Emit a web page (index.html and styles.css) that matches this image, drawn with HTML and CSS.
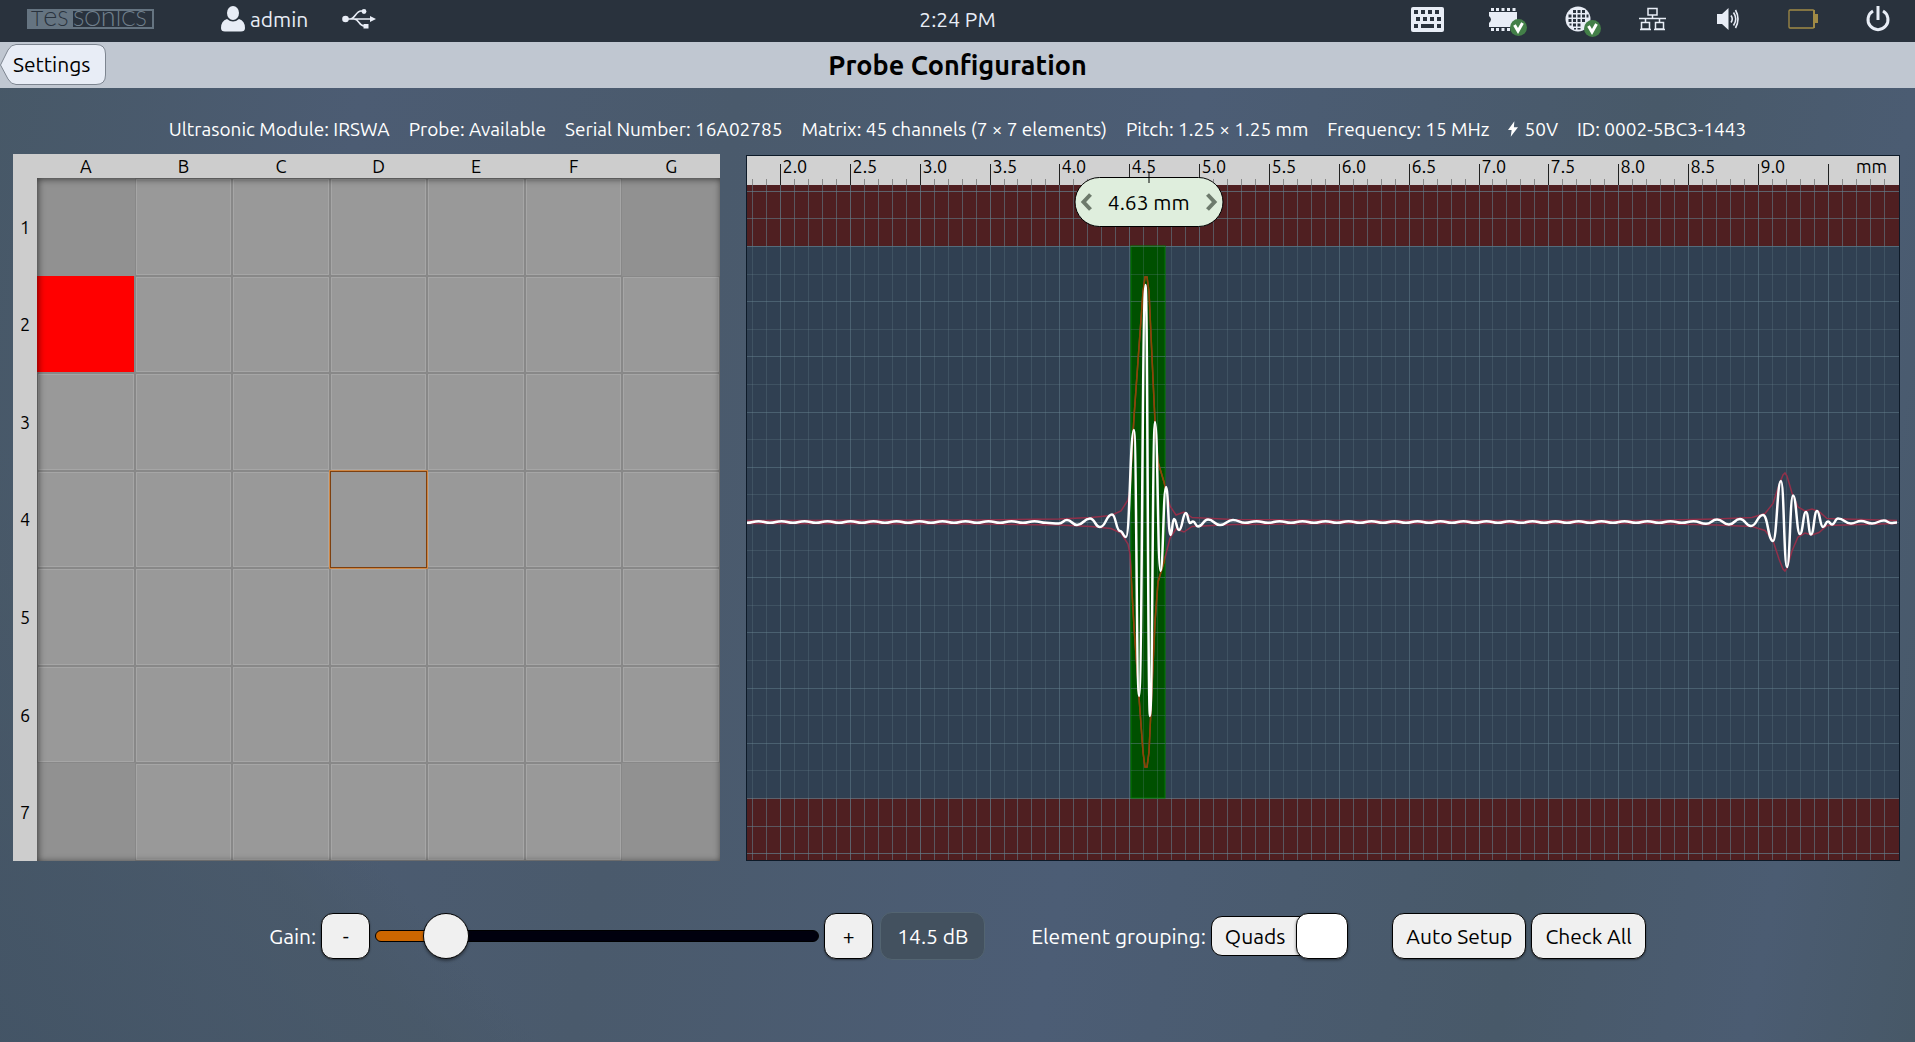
FILE: index.html
```html
<!DOCTYPE html>
<html lang="en">
<head>
  <meta charset="UTF-8" />
  <meta name="viewport" content="width=device-width, initial-scale=1.0"/>
  <title>Probe Configuration</title>
  <link rel="stylesheet" href="styles.css">
</head>
<body>

  <header class="topbar">
    <div class="topbar-left">
      <svg class="logo" width="127" height="20" viewBox="0 0 127 20" role="img" aria-label="Tessonics">
        <rect x="0" y="0" width="46" height="20" class="logo-fill"/>
        <rect x="1" y="1" width="125" height="18" class="logo-frame"/>
        <text x="4" y="17" class="logo-dark">T<tspan class="logo-low">e</tspan>S</text>
        <text x="46" y="17" class="logo-light">SO<tspan class="logo-low">n</tspan>ICS</text>
      </svg>
      <button class="user-btn">
        <svg width="24" height="26" viewBox="0 0 24 26" fill="currentColor">
          <ellipse cx="12" cy="7" rx="6" ry="7"/>
          <path d="M6 13q6 5 12 0q6 2 6 9q0 3.500-4 3.500H4q-4 0-4-3.500q0-7 6-9z"/>
        </svg>
        admin
      </button>
      <svg class="usb" width="34" height="20" viewBox="0 0 34 20" fill="none" stroke="currentColor" stroke-width="1.600">
        <circle cx="3.500" cy="10" r="3.300" fill="currentColor" stroke="none"/>
        <path d="M3 10h26M8 10c5 0 6-8 11-8h3M12 10c5 0 5 7 10 7h2"/>
        <path d="M28 7l6 3l-6 3z" fill="currentColor" stroke="none"/>
        <circle cx="22" cy="2.500" r="2.400" fill="currentColor" stroke="none"/>
        <rect x="21.500" y="15" width="5" height="4.500" fill="currentColor" stroke="none"/>
      </svg>
    </div>
    <div class="clock">2:24 PM</div>
    <div class="status">
      <button aria-label="Keyboard">
        <svg width="33" height="25" viewBox="0 0 33 25">
          <rect width="33" height="25" rx="2" fill="currentColor"/>
          <path class="cut" d="M3 3h4v4H3zM10 3h4v4h-4zM17 3h4v4h-4zM24 3h4v4h-4zM5 10h4v4H5zM12 10h4v4h-4zM19 10h4v4h-4zM26 10h4v4h-4zM3 17h4v4H3zM10 17h13v4H10zM26 17h4v4h-4z"/>
        </svg>
      </button>
      <button aria-label="Module">
        <span class="badged">
          <svg width="28" height="23" viewBox="0 0 28 23" fill="currentColor">
            <path d="M0 4h28v15H0v-4q4-3.500 0-7zM2 0h3v3H2zM7 0h3v3H7zM12.500 0h3v3h-3zM18 0h3v3h-3zM23.500 0h3v3h-3zM2 20h3v3H2zM7 20h3v3H7zM12.500 20h3v3h-3zM18 20h3v3h-3z"/>
          </svg>
          <svg class="badge" width="17" height="17" viewBox="0 0 17 17"><circle cx="8.500" cy="8.500" r="8.500"/><path d="M4.500 6l3.500 6l4.500-8"/></svg>
        </span>
      </button>
      <button aria-label="Network">
        <span class="badged">
          <svg width="26" height="26" viewBox="0 0 26 26">
            <circle cx="13" cy="13" r="12.500" fill="currentColor"/>
            <path class="cut" d="M8 4h3v3H8zM12.500 4h3v3h-3zM17 4h3v3h-3zM3.500 8.500h3v3h-3zM8 8.500h3v3H8zM12.500 8.500h3v3h-3zM17 8.500h3v3h-3zM21.500 8.500h2v3h-2zM3.500 13h3v3h-3zM8 13h3v3H8zM12.500 13h3v3h-3zM17 13h3v3h-3zM4.500 17.500h2v2h-2zM8 17.500h3v3H8zM12.500 17.500h3v3h-3zM9 22h2v1.500H9zM12.500 22h3v1.500h-3z"/>
          </svg>
          <svg class="badge" width="17" height="17" viewBox="0 0 17 17"><circle cx="8.500" cy="8.500" r="8.500"/><path d="M4.500 6l3.500 6l4.500-8"/></svg>
        </span>
      </button>
      <button aria-label="LAN">
        <svg width="27" height="24" viewBox="0 0 27 24" fill="none" stroke="currentColor" stroke-width="1.500">
          <path d="M9 1.500h9v6.500H9zM13.500 8v3.500M0 11.500h27M6.500 11.500V15M20.500 11.500V15M2.500 15.500h8V22h-8zM16.500 15.500h8V22h-8zM1 22.500h11M15 22.500h11"/>
        </svg>
      </button>
      <button aria-label="Volume">
        <svg width="22" height="22" viewBox="0 0 22 22" fill="none" stroke="currentColor" stroke-width="1.600">
          <path d="M0 6h5l6.500-6v22L5 16H0z" fill="currentColor" stroke="none"/>
          <path d="M14 7.500q2.500 3.500 0 7M16.500 4.500q4.500 6.500 0 13M18.500 2q5 9 0 18"/>
        </svg>
      </button>
      <button aria-label="Battery">
        <svg class="battery" width="30" height="20" viewBox="0 0 30 20">
          <rect x="1" y="1" width="25" height="18" rx="1" fill="none" stroke="currentColor" stroke-width="1.300"/>
          <path d="M25 1h2v4h3v9h-3v5h-2z" fill="currentColor"/>
        </svg>
      </button>
      <button aria-label="Power">
        <svg width="24" height="26" viewBox="0 0 24 26" fill="none" stroke="currentColor" stroke-width="3">
          <path d="M7 5a10 10 0 1 0 10 0M12 0v14"/>
        </svg>
      </button>
    </div>
  </header>

  <div class="titlebar">
    <a class="back" href="#settings">
      <svg width="107" height="42" viewBox="0 0 107 42">
        <path d="M0.500 21L8 6Q11 0.500 16 0.500H96Q105.500 0.500 105.500 10V31Q105.500 40.500 96 40.500H16Q11 40.500 8 35Z"/>
      </svg>
      <span>Settings</span>
    </a>
    <h1>Probe Configuration</h1>
  </div>

  <main>
    <div class="info">
      <span>Ultrasonic Module: IRSWA</span>
      <span>Probe: Available</span>
      <span>Serial Number: 16A02785</span>
      <span>Matrix: 45 channels (7 × 7 elements)</span>
      <span>Pitch: 1.25 × 1.25 mm</span>
      <span>Frequency: 15 MHz</span>
      <span><svg width="10" height="16" viewBox="0 0 11 17" fill="currentColor"><path d="M7 0L0 9.500h4L3 17l8-10.500H6.500z"/></svg> 50V</span>
      <span>ID: 0002-5BC3-1443</span>
    </div>

    <div class="panels">
      <div class="matrix">
        <div class="cols"><span>A</span><span>B</span><span>C</span><span>D</span><span>E</span><span>F</span><span>G</span></div>
        <div class="rows"><span>1</span><span>2</span><span>3</span><span>4</span><span>5</span><span>6</span><span>7</span></div>
        <div class="cells" id="cells"></div>
      </div>

      <div class="scan">
        <svg id="chart" viewBox="0 0 1154 706">
          <defs>
            <clipPath id="gate-clip"><rect x="385" y="91" width="34" height="552"/></clipPath>
          </defs>
          <rect class="plot" width="1154" height="706"/>
          <rect class="limit" y="30" width="1154" height="61"/>
          <rect class="limit" y="643" width="1154" height="63"/>
          <g id="grid"></g>
          <rect class="gate" x="385" y="91" width="34" height="552"/>
          <g id="gate-grid" clip-path="url(#gate-clip)"></g>
          <rect class="ruler" width="1154" height="30"/>
          <g id="ticks"></g>
          <g id="waves"></g>
          <rect class="frame" x="0.500" y="0.500" width="1153" height="705"/>
        </svg>
        <div class="gate-pill">
          <button aria-label="Decrease"><svg width="12" height="18" viewBox="0 0 12 18"><path d="M10 1.500L3 9l7 7.500"/></svg></button>
          <span>4.63 mm</span>
          <button aria-label="Increase"><svg width="12" height="18" viewBox="0 0 12 18"><path d="M2 1.500L9 9l-7 7.500"/></svg></button>
        </div>
      </div>
    </div>

    <div class="controls">
      <div class="group">
        <label for="gain">Gain:</label>
        <button class="btn step" id="gain-down">-</button>
        <input type="range" id="gain" min="0" max="124" step="0.5" value="14.5">
        <button class="btn step" id="gain-up">+</button>
        <output class="gain-value" id="gain-value" for="gain">14.5 dB</output>
      </div>
      <div class="group">
        <label for="grouping">Element grouping:</label>
        <label class="toggle">
          <input type="checkbox" id="grouping" checked>
          <span class="toggle-text">Quads</span>
          <span class="knob"></span>
        </label>
      </div>
      <div class="group">
        <button class="btn">Auto Setup</button>
        <button class="btn">Check All</button>
      </div>
    </div>
  </main>

  <script src="script.js"></script>
</body>
</html>
```
FILE: styles.css
```css
* {
  box-sizing: border-box;
}

body {
  margin: 0;
  min-height: 100vh;
  font-family: Ubuntu, "Noto Sans", sans-serif;
  font-size: 21px;
  line-height: 28px;
  color: #fff;
  background:
    linear-gradient(48deg, rgba(66, 83, 100, 0.8) 0%, rgba(72, 88, 103, 0.7) 15%, rgba(72, 88, 103, 0) 19%),
    linear-gradient(100deg, #475867 0%, #4c5c73 18%, #4a5a6c 36%, #4c5d75 58%, #485969 80%, #4b5c72 92%, #475867 100%);
}

button {
  font: inherit;
  color: inherit;
  background: none;
  border: none;
  padding: 0;
  cursor: pointer;
}

svg {
  display: block;
  overflow: visible;
}

/* top bar */
.topbar {
  display: grid;
  grid-template-columns: 1fr auto 1fr;
  align-items: center;
  height: 42px;
  padding-bottom: 4px;
  background: #29323d;
  color: #e8edf6;
}

.topbar-left {
  display: flex;
  align-items: center;
  padding-left: 27px;
}

.logo-fill {
  fill: #657481;
}

.logo-frame {
  fill: none;
  stroke: #657481;
  stroke-width: 2;
}

.logo text {
  font-family: Lato, sans-serif;
  font-weight: 300;
  font-size: 21px;
}

.logo .logo-low {
  font-size: 27px;
}

.logo-dark {
  fill: #29323d;
}

.logo-light {
  fill: #71808d;
}

.user-btn {
  display: flex;
  align-items: center;
  gap: 5px;
  margin-left: 67px;
}

.usb {
  margin-left: 34px;
}

.status {
  display: flex;
  justify-content: flex-end;
}

.status button {
  width: 75px;
  height: 38px;
  display: flex;
  justify-content: center;
  align-items: center;
}

.cut {
  fill: #29323d;
}

.badged {
  position: relative;
}

.badge {
  position: absolute;
  right: -10px;
  bottom: -5px;
}

.badge circle {
  fill: #437f48;
}

.badge path {
  fill: none;
  stroke: #fff;
  stroke-width: 3;
}

.battery {
  color: #a08a45;
}

/* title bar */
.titlebar {
  display: grid;
  grid-template-columns: 1fr auto 1fr;
  align-items: center;
  height: 46px;
  background: #c0c7d1;
  color: #000;
}

.titlebar h1 {
  margin: 0;
  font-size: 27px;
  line-height: 32px;
}

.back {
  display: grid;
  justify-self: start;
  align-items: center;
  color: #000;
  text-decoration: none;
}

.back svg,
.back span {
  grid-area: 1 / 1;
}

.back span {
  padding: 0 0 3px 13px;
}

.back path {
  fill: #e8edf6;
  stroke: #7d8590;
}

/* probe info */
.info {
  display: flex;
  justify-content: center;
  gap: 19px;
  padding: 27px 0 11px;
  font-size: 19px;
}

.info span {
  display: flex;
  align-items: center;
  gap: 6px;
  white-space: nowrap;
}

.panels {
  display: grid;
  grid-template-columns: 707fr 1154fr;
  gap: 26px;
  padding: 0 15px 0 13px;
}

/* element matrix */
.matrix {
  display: grid;
  grid-template: 24px 1fr / 24px 1fr;
  aspect-ratio: 1;
  background: #cdcdcd;
  color: #000;
  font-size: 18px;
  line-height: 24px;
}

.cols {
  grid-column: 2;
  display: grid;
  grid-template-columns: repeat(7, 1fr);
  text-align: center;
}

.rows {
  display: grid;
  grid-template-rows: repeat(7, 1fr);
  align-items: center;
  text-align: center;
}

.cells {
  position: relative;
  display: grid;
  grid-template: repeat(7, 1fr) / repeat(7, 1fr);
  background: #888;
}

.cells::after {
  content: "";
  position: absolute;
  inset: 0;
  box-shadow: inset 1px 1px 7px rgba(0, 0, 0, 0.6);
  pointer-events: none;
}

.cell {
  margin: 1px;
  background: #999;
  border: 1px solid #a6a6a6;
}

.cell.empty {
  margin: 0;
  background: #919191;
  border-color: #919191;
}

.cell.bad {
  margin: 0 1px 1px 0;
  background: #f00;
  border-color: #f00;
}

.cell.selected {
  margin: 0;
  border-color: #7d4010;
  outline: 1px solid #cf8745;
}

/* a-scan */
.scan {
  position: relative;
  margin-top: 1px;
}

#chart {
  width: 100%;
}

.plot {
  fill: #304052;
}

.limit {
  fill: #4f1f21;
}

.ruler {
  fill: #d1d1d1;
}

.frame {
  fill: none;
  stroke: #0d1a28;
}

.gate {
  fill: #005000;
  stroke: #007a00;
}

.line {
  stroke: #6b8794;
  stroke-opacity: 0.25;
}

.line.major {
  stroke-opacity: 0.45;
}

.limit-line {
  stroke: #5f7a88;
  stroke-opacity: 0.45;
}

.tick {
  stroke: #8a8a8a;
}

.tick.major {
  stroke: #222;
}

#ticks text {
  font-size: 18px;
}

.envelope {
  fill: none;
  stroke: #92304a;
  stroke-width: 1.5;
}

.envelope.gated {
  stroke: #8a4a00;
}

.signal {
  fill: none;
  stroke: #fff;
  stroke-width: 2.5;
  stroke-linejoin: round;
}

.gate-pill {
  position: absolute;
  left: 34.9%;
  top: 3.1%;
  transform: translateX(-50%);
  display: flex;
  justify-content: space-between;
  align-items: center;
  width: 149px;
  height: 50px;
  padding: 0 5px;
  border: 1px solid #000;
  border-radius: 25px;
  background: #dfeedd;
  color: #000;
}

.gate-pill::before {
  content: "";
  position: absolute;
  left: 50%;
  top: -6px;
  width: 1px;
  height: 11px;
  background: #000;
}

.gate-pill path {
  fill: none;
  stroke: #6d7a6c;
  stroke-width: 4;
}

/* bottom controls */
.controls {
  display: flex;
  justify-content: center;
  flex-wrap: wrap;
  gap: 44px;
  padding: 51px 0 40px;
}

.group {
  display: flex;
  align-items: center;
  gap: 5px;
}

.btn {
  height: 46px;
  padding: 0 13px;
  border: 1px solid #000;
  border-radius: 12px;
  background: #f0f0f0;
  color: #000;
  box-shadow: 0 1px 2px rgba(0, 0, 0, 0.4);
}

.step {
  width: 49px;
}

#gain {
  appearance: none;
  width: 444px;
  height: 46px;
  margin: 0;
  background: none;
}

#gain::-webkit-slider-runnable-track {
  height: 12px;
  border: 1px solid #000;
  border-radius: 6px;
  background: linear-gradient(to right, #cc6600 var(--fill, 16%), #00000e var(--fill, 16%));
}

#gain::-webkit-slider-thumb {
  appearance: none;
  width: 46px;
  height: 46px;
  margin-top: -18px;
  border: 1px solid #000;
  border-radius: 50%;
  background: #f0f0f0;
  box-shadow: 0 2px 3px rgba(0, 0, 0, 0.4);
}

.gain-value {
  width: 105px;
  margin: 0 2px;
  padding: 9px 0;
  border: 1px solid #536471;
  border-radius: 12px;
  background: #43515f;
  text-align: center;
}

.toggle {
  display: flex;
  align-items: center;
  height: 40px;
  border: 1px solid #000;
  border-radius: 11px;
  background: #f0f0f0;
  color: #000;
  cursor: pointer;
}

.toggle input {
  appearance: none;
  width: 0;
  margin: 0;
}

.toggle-text {
  padding: 0 12px 0 13px;
}

.knob {
  width: 52px;
  height: 46px;
  margin: -4px -1px;
  border: 1px solid #000;
  border-radius: 12px;
  background: #fff;
  box-shadow: 0 1px 3px rgba(0, 0, 0, 0.5);
}

.toggle input:not(:checked) ~ .knob {
  order: -1;
}
```
FILE: script.js
```javascript
const NS = "http://www.w3.org/2000/svg";

function add(parent, name, attrs, text) {
  const el = document.createElementNS(NS, name);
  for (const key in attrs) el.setAttribute(key, attrs[key]);
  if (text) el.textContent = text;
  document.getElementById(parent).appendChild(el);
}

// element matrix
const cells = document.getElementById("cells");
const empty = ["A1", "G1", "A7", "G7"];
for (let row = 1; row <= 7; row++) {
  for (const col of "ABCDEFG") {
    const id = col + row;
    const cell = document.createElement("button");
    cell.className = "cell";
    cell.setAttribute("aria-label", id);
    if (empty.includes(id)) cell.classList.add("empty");
    if (id === "A2") cell.classList.add("bad");
    if (id === "D4") cell.classList.add("selected");
    cells.appendChild(cell);
  }
}

// ruler and vertical grid, one line per 0.1 mm
const zero = 34;
const step = 13.97;
for (let i = -2; i <= 79; i++) {
  const x = Math.round(zero + i * step) + 0.5;
  const major = i % 5 === 0 ? " major" : "";
  const v = { x1: x, x2: x };
  add("grid", "line", { ...v, y1: 30, y2: 706, class: "line" + major });
  add("grid", "line", { ...v, y1: 30, y2: 91, class: "limit-line" });
  add("grid", "line", { ...v, y1: 643, y2: 706, class: "limit-line" });
  add("gate-grid", "line", { ...v, y1: 91, y2: 643, class: "line" });
  add("ticks", "line", { ...v, y1: major ? 9 : 24, y2: 30, class: "tick" + major });
  if (major && i <= 70) {
    add("ticks", "text", { x: x + 2, y: 18 }, (2 + i / 10).toFixed(1));
  }
}
add("ticks", "text", { x: 1110, y: 18 }, "mm");

for (let i = -2; i <= 22; i++) {
  const y = Math.round(91 + i * 27.6) + 0.5;
  const cls = "line" + (i % 2 === 0 ? " major" : "");
  add("grid", "line", { x1: 0, x2: 1154, y1: y, y2: y, class: cls });
  if (i < 1 || i > 19) add("grid", "line", { x1: 0, x2: 1154, y1: y, y2: y, class: "limit-line" });
  add("gate-grid", "line", { x1: 0, x2: 1154, y1: y, y2: y, class: cls });
}

// signal turning points: x, offset from the middle line
const mid = 367;
const first = [[313, 1.5], [321, -2], [331, 3], [344, -3.5], [354, 5], [366, -7.5], [374, 9], [380, 15],
  [388, -92], [393, 174], [399.5, -237], [404, 194], [409, -100], [414.5, 49],
  [420, -35], [424.5, 13], [428, -3], [433, 8], [440, -9], [444, 1], [447, -0.5], [452, 4.5],
  [462, -2.5], [474, 3], [487, -2]];
const second = [[960, 1.8], [971, -2.5], [983, 2.5], [994, -3], [1005, 4], [1017, -7], [1027, 19],
  [1035, -41], [1041, 45], [1047, -26.5], [1054, 12], [1060, -10], [1065, 12.5], [1071, -11],
  [1077, 5], [1082, -0.5], [1086, 2.5], [1092, -3.5], [1105, 1.5], [1115, -1], [1126, 1.5],
  [1138, -1.5], [1145, 1], [1151, 0.5]];

function ripple(from, to) {
  const points = [];
  let sign = 1;
  for (let x = from; x < to; x += 11.5) {
    points.push([x, sign * 0.8]);
    sign = -sign;
  }
  return points;
}

function curve(points) {
  let d = "";
  let prev = null;
  for (const [x, offset] of points) {
    const y = mid + offset;
    if (prev) {
      const c = (prev[0] + x) / 2;
      d += `C${c} ${prev[1]} ${c} ${y} ${x} ${y}`;
    } else {
      d = `M${x} ${y}`;
    }
    prev = [x, y];
  }
  return d;
}

const envelope = [[1, 1.5], [240, 2], [313, 3], [345, 4.5], [365, 6.5], [375, 11], [382, 22], [384, 32],
  [386, 70], [388, 105], [393, 175], [397, 230], [399, 245], [401, 245], [403, 230], [406, 165], [409, 100],
  [412, 60], [418, 40], [424, 16], [430, 7], [438, 10], [446, 4.5], [487, 2.5], [600, 1.5],
  [900, 1.5], [970, 3], [1006, 4.5], [1019, 8.5], [1027, 18.5], [1033, 37], [1037, 47], [1039, 49], [1041, 46],
  [1046, 29], [1052, 15], [1059, 11], [1066, 13], [1073, 10.5], [1081, 3.5], [1151, 1.5]];

for (const flip of [1, -1]) {
  const d = "M" + envelope.map(([x, y]) => `${x} ${mid + y * flip}`).join("L");
  add("waves", "path", { d, class: "envelope" });
  add("waves", "path", { d, class: "envelope gated", "clip-path": "url(#gate-clip)" });
}
const signal = [...ripple(1, 310), ...first, ...ripple(499, 955), ...second];
add("waves", "path", { d: curve(signal), class: "signal" });

// gain slider
const gain = document.getElementById("gain");
function updateGain() {
  const part = gain.value / gain.max;
  gain.style.setProperty("--fill", 5 + part * 90 + "%");
  document.getElementById("gain-value").textContent = Number(gain.value).toFixed(1) + " dB";
}
gain.addEventListener("input", updateGain);
document.getElementById("gain-down").onclick = () => { gain.stepDown(); updateGain(); };
document.getElementById("gain-up").onclick = () => { gain.stepUp(); updateGain(); };
updateGain();
```
